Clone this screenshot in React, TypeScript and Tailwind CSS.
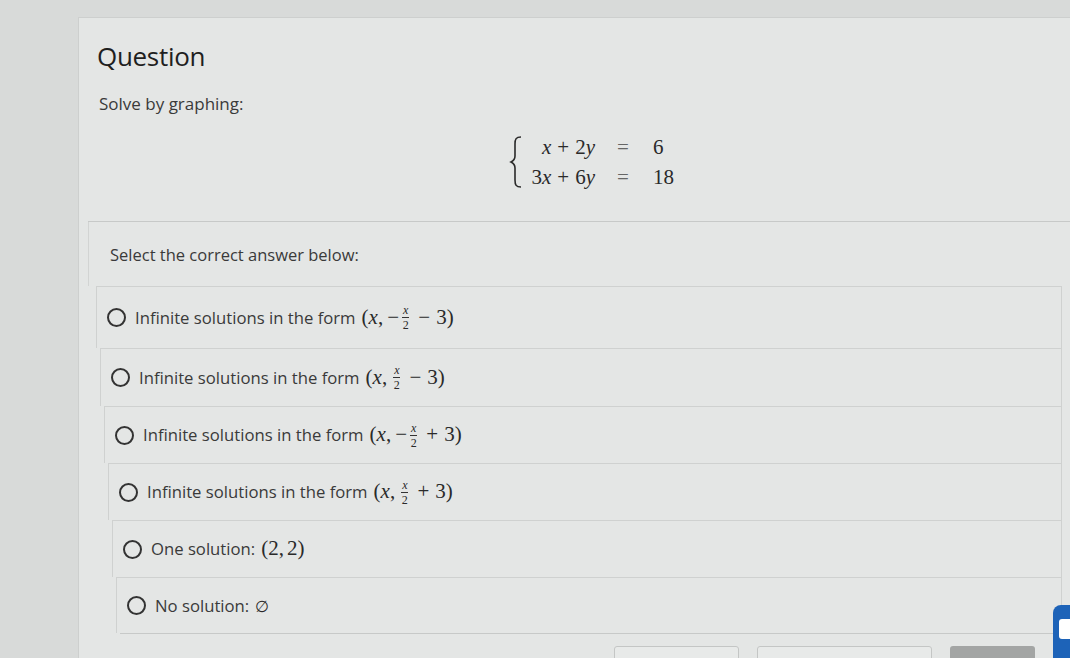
import React from 'react'

const sans = { fontFamily: '"Open Sans", "Noto Sans", sans-serif' }
const serif = { fontFamily: '"Liberation Serif", "DejaVu Serif", serif' }

function Frac() {
  return (
    <span className="inline-flex flex-col items-center align-middle mx-[3px] leading-none text-[12px] -translate-y-[1px]">
      <span className="italic px-[1px] pb-[1px]">x</span>
      <span className="block w-full h-px bg-[#333]" />
      <span className="pt-[1px]">2</span>
    </span>
  )
}

function Op({ c }: { c: string }) {
  return <span className="mx-[6px]">{c}</span>
}

function Math({ children }: { children: React.ReactNode }) {
  return (
    <span className="text-[21px] text-[#2a2a2a] ml-[6px] whitespace-nowrap" style={serif}>
      {children}
    </span>
  )
}

const options: { shift: string; h: string; label: string; math: React.ReactNode }[] = [
  {
    shift: 'ml-[8px]',
    h: 'h-[62px]',
    label: 'Infinite solutions in the form',
    math: (
      <>
        (<i>x</i>,<span className="ml-[4px]">−</span>
        <Frac />
        <Op c="−" />
        3)
      </>
    ),
  },
  {
    shift: 'ml-[12px]',
    h: 'h-[58px]',
    label: 'Infinite solutions in the form',
    math: (
      <>
        (<i>x</i>,<span className="ml-[3px]" />
        <Frac />
        <Op c="−" />
        3)
      </>
    ),
  },
  {
    shift: 'ml-[16px]',
    h: 'h-[57px]',
    label: 'Infinite solutions in the form',
    math: (
      <>
        (<i>x</i>,<span className="ml-[4px]">−</span>
        <Frac />
        <Op c="+" />
        3)
      </>
    ),
  },
  {
    shift: 'ml-[20px]',
    h: 'h-[57px]',
    label: 'Infinite solutions in the form',
    math: (
      <>
        (<i>x</i>,<span className="ml-[3px]" />
        <Frac />
        <Op c="+" />
        3)
      </>
    ),
  },
  {
    shift: 'ml-[24px]',
    h: 'h-[57px]',
    label: 'One solution:',
    math: <>(2,<span className="ml-[3px]" />2)</>,
  },
  {
    shift: 'ml-[28px]',
    h: 'h-[56px]',
    label: 'No solution:',
    math: <span className="text-[16px]" style={sans}>∅</span>,
  },
]

export default function App() {
  return (
    <div className="relative w-[1070px] h-[658px] overflow-hidden bg-[#d8dad9]" style={sans}>
      <div className="ml-[78px] mt-[17px] bg-[#e4e6e5] border-t border-l border-[#cdcfce] min-h-[700px]">
        {/* question header */}
        <div className="h-[203px] pl-[18px] pt-[20px] relative">
          <h1 className="text-[26px] leading-[36px] text-[#1f1f1f] tracking-[-0.3px]">Question</h1>
          <p className="mt-[18px] text-[17px] leading-[24px] text-[#3a3a3a] ml-[2px]">Solve by graphing:</p>
          <div className="flex items-center ml-[412px] mt-[16px] text-[21px] text-[#2a2a2a]" style={serif}>
            <svg width="14" height="54" viewBox="0 0 14 54" className="mr-[2px]">
              <path
                d="M12 2 C 7 2, 6 4, 6 9 L 6 21 C 6 25, 4 26, 2 27 C 4 28, 6 29, 6 33 L 6 45 C 6 50, 7 52, 12 52"
                fill="none"
                stroke="#2a2a2a"
                strokeWidth="1.6"
              />
            </svg>
            <div className="grid grid-cols-[70px_56px_40px] leading-[30px]">
              <span className="text-right">
                <i>x</i>
                <Op c="+" />
                2<i>y</i>
              </span>
              <span className="text-center text-[#666]">=</span>
              <span className="pl-[2px]">6</span>
              <span className="text-right">
                3<i>x</i>
                <Op c="+" />
                6<i>y</i>
              </span>
              <span className="text-center text-[#666]">=</span>
              <span className="pl-[2px]">18</span>
            </div>
          </div>
        </div>

        {/* answers */}
        <div className="border-t border-[#c7c9c8] ml-[9px]">
          <div className="h-[64px] pl-[21px] pt-[3px] flex items-center text-[16.5px] text-[#3a3a3a] border-l border-[#d2d4d3]">
            Select the correct answer below:
          </div>
          {options.map((o, i) => (
            <div
              key={i}
              className={`${o.shift} ${o.h} mr-[8px] flex items-center border-t border-l border-r border-[#cfd1d0] pl-[10px]`}
            >
              <span className="w-[19px] h-[19px] rounded-full border-2 border-[#333] shrink-0" />
              <span className="ml-[9px] text-[16.7px] text-[#3a3a3a] whitespace-nowrap">{o.label}</span>
              <Math>{o.math}</Math>
            </div>
          ))}
          <div className="ml-[32px] mr-[8px] border-t border-[#c7c9c8] h-[40px] flex items-start gap-[18px] pl-[494px] pt-[12px]">
            <div className="w-[125px] h-[30px] rounded-[3px] border border-[#c4c6c5] bg-[#e8eae9]" />
            <div className="w-[175px] h-[30px] rounded-[3px] border border-[#c4c6c5] bg-[#e8eae9]" />
            <div className="w-[85px] h-[30px] rounded-[3px] bg-[#a3a5a4]" />
          </div>
        </div>
      </div>

      {/* chat widget */}
      <div className="absolute left-[1053px] top-[605px] w-[40px] h-[70px] rounded-tl-[8px] bg-[#1d63b8] flex items-start pt-[14px] pl-[6px]">
        <div className="w-[14px] h-[20px] rounded-[3px] bg-white" />
      </div>
    </div>
  )
}
